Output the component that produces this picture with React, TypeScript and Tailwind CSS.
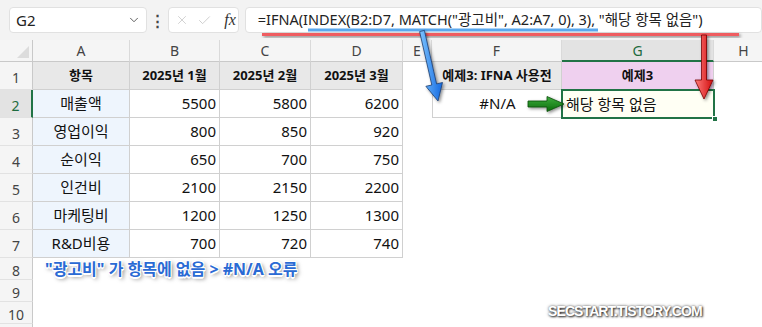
import React from 'react';
import { X, Check, ChevronDown } from 'lucide-react';

const KR = "font-['Noto_Sans','Noto_Sans_CJK_KR',sans-serif]";

const data: [string, number, number, number][] = [
  ['매출액', 5500, 5800, 6200],
  ['영업이익', 800, 850, 920],
  ['순이익', 650, 700, 750],
  ['인건비', 2100, 2150, 2200],
  ['마케팅비', 1200, 1250, 1300],
  ['R&D비용', 700, 720, 740],
];

function arrow(x1: number, y1: number, x2: number, y2: number, sw: number, hl: number, hw: number) {
  const dx = x2 - x1;
  const dy = y2 - y1;
  const len = Math.hypot(dx, dy);
  const ux = dx / len;
  const uy = dy / len;
  const px = -uy;
  const py = ux;
  const bx = x2 - ux * hl;
  const by = y2 - uy * hl;
  const pts = [
    [x1 + (px * sw) / 2, y1 + (py * sw) / 2],
    [bx + (px * sw) / 2, by + (py * sw) / 2],
    [bx + (px * hw) / 2, by + (py * hw) / 2],
    [x2, y2],
    [bx - (px * hw) / 2, by - (py * hw) / 2],
    [bx - (px * sw) / 2, by - (py * sw) / 2],
    [x1 - (px * sw) / 2, y1 - (py * sw) / 2],
  ];
  return pts.map((p) => p.map((v) => v.toFixed(1)).join(',')).join(' ');
}

function ColHead({ label, active }: { label: string; active?: boolean }) {
  return (
    <div
      className={
        'flex items-center justify-center border-r border-[#dadada] text-[14px] ' +
        (active
          ? 'bg-[#e3e3e3] text-[#1d6b3e] border-b-2 border-b-[#217346]'
          : 'bg-[#f5f5f5] text-[#444] border-b border-b-[#c9c9c9]')
      }
    >
      {label}
    </div>
  );
}

function RowHead({ n, active }: { n?: number; active?: boolean }) {
  return (
    <div
      className={
        'flex items-center justify-center pt-1 text-[14px] border-b border-b-[#e2e2e2] ' +
        (active
          ? 'bg-[#e3e3e3] text-[#1d6b3e] border-r-2 border-r-[#217346]'
          : 'bg-[#f5f5f5] text-[#444] border-r border-r-[#c9c9c9]')
      }
    >
      {n}
    </div>
  );
}

export default function App() {
  return (
    <div className={`relative w-[762px] h-[327px] overflow-hidden bg-white ${KR}`}>
      {/* formula bar */}
      <div className="flex items-start h-[40px] pt-[7px] bg-[#f3f3f3]">
        <div className="ml-[9px] w-[141px] h-[26px] flex items-center justify-between pl-[6px] pr-[5px] bg-white border border-[#e1e1e1] rounded-[4px] text-[15px] text-[#222]">
          <span>G2</span>
          <ChevronDown size={14} strokeWidth={1.6} className="text-[#555]" />
        </div>
        <div className="w-[22px] h-[26px] flex items-center justify-center text-[15px] font-bold text-[#444]">⋮</div>
        <div className="w-[72px] h-[26px] flex items-center gap-[8px] pl-[6px] bg-white border border-[#e1e1e1] rounded-[4px]">
          <X size={14} strokeWidth={1.3} className="text-[#c4c4c4]" />
          <Check size={15} strokeWidth={1.3} className="text-[#c4c4c4]" />
          <span className="ml-[4px] text-[16px] italic font-['Liberation_Serif',serif] text-[#333]">fx</span>
        </div>
        <div className="ml-[6px] w-[530px] h-[26px] flex items-center pl-[12px] bg-white border border-[#e1e1e1] rounded-[4px] text-[14.5px] text-[#222] whitespace-nowrap">
          =IFNA(INDEX(B2:D7, MATCH("광고비", A2:A7, 0), 3), "해당 항목 없음")
        </div>
      </div>

      {/* sheet */}
      <div className="grid grid-cols-[33px_97px_90px_91px_92px_29px_130px_152px_60px] grid-rows-[22px_repeat(7,28px)_repeat(4,22px)]">
        <div className="relative bg-[#f5f5f5] border-r border-r-[#c9c9c9] border-b border-b-[#c9c9c9]">
          <div className="absolute right-[3px] bottom-[3px] w-0 h-0 border-l-[12px] border-l-transparent border-b-[12px] border-b-[#dcdcdc]" />
        </div>
        {['A', 'B', 'C', 'D', 'E', 'F', 'G', 'H'].map((c) => (
          <ColHead key={c} label={c} active={c === 'G'} />
        ))}

        {/* row 1 */}
        <RowHead n={1} />
        {['항목', '2025년 1월', '2025년 2월', '2025년 3월'].map((h) => (
          <div key={h} className="flex items-center justify-center bg-[#e8e8e8] border-r border-b border-[#d0d0d0] text-[13px] font-bold text-[#111]">
            {h}
          </div>
        ))}
        <div />
        <div className="flex items-center justify-center bg-[#e8e8e8] border-l border-r border-b border-[#d0d0d0] text-[13px] font-bold text-[#111] whitespace-nowrap">
          예제3: IFNA 사용전
        </div>
        <div className="flex items-center justify-center bg-[#efd0ef] border-r border-b border-[#d0d0d0] text-[13px] font-bold text-[#111]">
          예제3
        </div>
        <div />

        {data.map((r, i) => (
          <React.Fragment key={r[0]}>
            <RowHead n={i + 2} active={i === 0} />
            <div className="flex items-center justify-center bg-[#eef5fd] border-r border-b border-[#d0d0d0] text-[15px] text-[#111]">
              {r[0]}
            </div>
            {[r[1], r[2], r[3]].map((v, j) => (
              <div key={j} className="flex items-center justify-end pr-[3px] border-r border-b border-[#d0d0d0] text-[15px] text-[#111]">
                {v}
              </div>
            ))}
            <div />
            {i === 0 ? (
              <>
                <div className="flex items-center justify-center border-l border-b border-[#d0d0d0] text-[15px] text-[#111]">#N/A</div>
                <div className="relative flex items-center pl-[4px] bg-[#fffff4] text-[15px] text-[#111] whitespace-nowrap">
                  해당 항목 없음
                  <div className="absolute -left-[1px] -top-[1px] -right-[1px] -bottom-[1px] border-2 border-[#217346]" />
                  <div className="absolute -right-[4px] -bottom-[4px] w-[6px] h-[6px] bg-[#217346] border border-white" />
                </div>
              </>
            ) : (
              <>
                <div />
                <div />
              </>
            )}
            <div />
          </React.Fragment>
        ))}

        {/* rows 8-11 */}
        <RowHead n={8} />
        <div className="col-span-4 flex items-center pl-[12px] text-[16px] font-bold text-[#2a6ad4] whitespace-nowrap [text-shadow:1px_1px_0_#fff,-1px_-1px_0_#fff,1px_-1px_0_#fff,-1px_1px_0_#fff,0_2px_0_#fff,2px_2px_4px_rgba(0,0,0,0.6)]">
          "광고비" 가 항목에 없음 &gt; #N/A 오류
        </div>
        <div className="col-span-4" />
        <RowHead n={9} />
        <div className="col-span-8" />
        <RowHead n={10} />
        <div className="col-span-8" />
        <RowHead />
        <div className="col-span-8" />
      </div>

      {/* watermark */}
      <div className="absolute left-[548px] top-[301px] text-[14px] font-bold text-white tracking-[-0.9px] font-['Liberation_Sans',sans-serif] [text-shadow:1px_1px_2px_#333,0_0_3px_#555]">
        SECSTART.TISTORY.COM
      </div>

      {/* annotations */}
      <svg className="absolute left-0 top-0 pointer-events-none" width={762} height={327}>
        <defs>
          <linearGradient id="gb" x1="0" y1="0" x2="1" y2="0">
            <stop offset="0" stopColor="#7cc4ff" />
            <stop offset="1" stopColor="#1268e0" />
          </linearGradient>
          <linearGradient id="gr" x1="0" y1="0" x2="1" y2="0">
            <stop offset="0" stopColor="#ff7b7b" />
            <stop offset="1" stopColor="#d10d0d" />
          </linearGradient>
          <linearGradient id="gg" x1="0" y1="0" x2="0" y2="1">
            <stop offset="0" stopColor="#3fae3f" />
            <stop offset="1" stopColor="#0b6d0b" />
          </linearGradient>
          <filter id="sh" x="-50%" y="-50%" width="200%" height="200%">
            <feDropShadow dx="1.5" dy="1.5" stdDeviation="1.5" floodColor="#000" floodOpacity="0.45" />
          </filter>
        </defs>
        <rect x={262} y={33} width={477} height={3} fill="#ef5b60" filter="url(#sh)" />
        <rect x={308} y={28.5} width={290} height={3} fill="#5aa8ee" />
        <polygon points={arrow(422, 31, 438, 101, 5, 17, 17)} fill="url(#gb)" stroke="#1d3d70" strokeWidth={0.8} filter="url(#sh)" />
        <polygon points={arrow(704, 35, 704, 99, 5, 19, 18)} fill="url(#gr)" stroke="#7a0000" strokeWidth={0.8} filter="url(#sh)" />
        <polygon points={arrow(528, 104, 564, 104, 6, 17, 15)} fill="url(#gg)" stroke="#0b4d0b" strokeWidth={0.8} filter="url(#sh)" />
      </svg>
    </div>
  );
}
